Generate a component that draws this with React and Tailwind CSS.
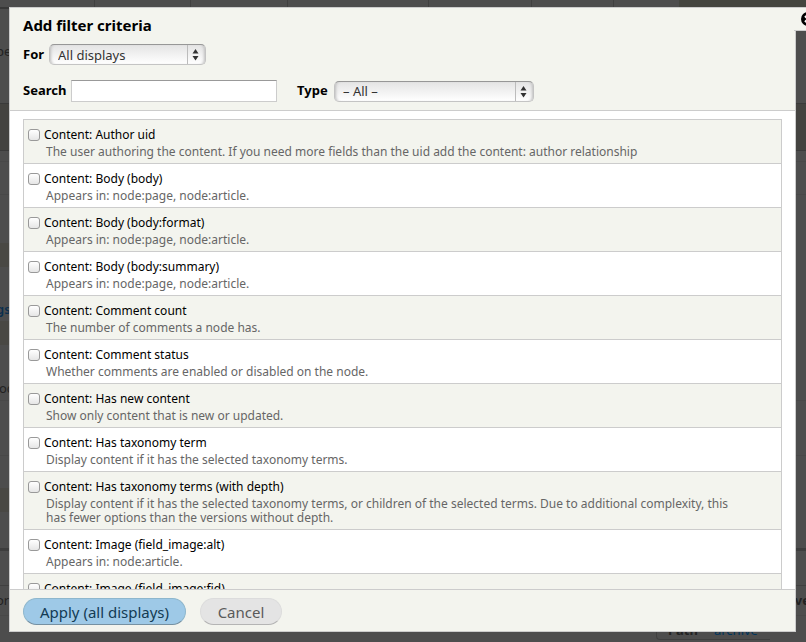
import React from "react";

const criteria = [
  { id: "uid", title: "Content: Author uid", desc: "The user authoring the content. If you need more fields than the uid add the content: author relationship" },
  { id: "body", title: "Content: Body (body)", desc: "Appears in: node:page, node:article." },
  { id: "body-format", title: "Content: Body (body:format)", desc: "Appears in: node:page, node:article." },
  { id: "body-summary", title: "Content: Body (body:summary)", desc: "Appears in: node:page, node:article." },
  { id: "comment-count", title: "Content: Comment count", desc: "The number of comments a node has." },
  { id: "comment-status", title: "Content: Comment status", desc: "Whether comments are enabled or disabled on the node." },
  { id: "has-new", title: "Content: Has new content", desc: "Show only content that is new or updated." },
  { id: "term", title: "Content: Has taxonomy term", desc: "Display content if it has the selected taxonomy terms." },
  { id: "term-depth", title: "Content: Has taxonomy terms (with depth)", desc: "Display content if it has the selected taxonomy terms, or children of the selected terms. Due to additional complexity, this has fewer options than the versions without depth." },
  { id: "image-alt", title: "Content: Image (field_image:alt)", desc: "Appears in: node:article." },
  { id: "image-fid", title: "Content: Image (field_image:fid)" },
];

const Select = ({ id, width, children }) => (
  <div className={`relative ${width}`}>
    <select
      id={id}
      className="block h-[21px] w-full appearance-none rounded-[5px] border border-[#c4c4c4] border-t-[#979797] bg-linear-to-b from-[#e4e4e4] to-white pl-2 text-[13px] leading-[18px] font-normal text-[#333] shadow-[inset_3px_0_3px_-2px_#bdbdbd,inset_-3px_0_3px_-2px_#bdbdbd]"
    >
      {children}
    </select>
    <svg className="pointer-events-none absolute top-px right-px h-[19px] w-[19px]" viewBox="0 0 19 19" aria-hidden="true">
      <path d="M1.5 0v19" stroke="#bcbcbc" />
      <path d="M6.5 8.5 9.5 4l3 4.5zM6.5 11h6l-3 4.5z" fill="#333" />
    </svg>
  </div>
);

// The dimmed views page that shows round the edges of the dialog
const Backdrop = () => (
  <div className="absolute inset-0 flex flex-col overflow-hidden bg-[#4d4d4d] text-[13px] leading-5 text-[#222]" aria-hidden="true">
    <div className="flex h-[7px] shrink-0">
      <div className="w-[95px] border-r border-[#404040]" />
      <div className="w-24 border-r border-[#404040]" />
      <div className="w-[97px] border-r border-[#404040]" />
      <div className="w-[141px] border-r border-[#404040]" />
      <div className="w-[103px] border-r border-[#404040]" />
      <div className="w-[82px] border-r border-[#404040]" />
      <div className="w-[65px]" />
      <div className="flex-1 bg-[#44453f]" />
    </div>
    <div className="flex h-24 shrink-0 items-start border-t-2 border-[#383838] pt-8">
      <span className="-ml-1">pe</span>
    </div>
    <div className="h-12 shrink-0 border-y border-[#3a3a3a] bg-[#444340]" />
    <div className="h-[11px] shrink-0 border-b border-[#484848]" />
    <div className="h-[33px] shrink-0 border-b border-[#484848]" />
    <div className="h-12 shrink-0" />
    <div className="h-6 w-1/2 shrink-0 bg-[#494844]" />
    <div className="flex h-[54px] shrink-0 items-end pb-0.5 text-[#0b2f4d]">
      <span className="-ml-1 font-semibold">gs</span>
    </div>
    <div className="h-6 w-1/2 shrink-0 bg-[#494844]" />
    <div className="flex h-14 shrink-0 items-end border-b border-[#484848] pb-0.5">
      <span className="-ml-px">oc</span>
    </div>
    <div className="h-[55px] shrink-0 border-b border-[#484848]" />
    <div className="h-8 shrink-0" />
    <div className="h-6 w-1/2 shrink-0 bg-[#494844]" />
    <div className="h-9 shrink-0" />
    <div className="h-[3px] shrink-0 bg-[#3d3d3d]" />
    <div className="h-[35px] shrink-0 border-b border-[#404040]" />
    <div className="flex h-[30px] shrink-0 items-start justify-between border-b border-[#484848] pt-1">
      <span className="-ml-1">or</span>
      <span className="-mr-1 font-bold">ve</span>
    </div>
    <div className="flex shrink-0 justify-end pr-9">
      <div className="flex h-6 w-[114px] items-start gap-4 rounded-bl border-b border-l border-[#3f3f3f] pt-1.5 pl-[11px] leading-4">
        <span className="font-bold">Path</span>
        <a href="#archive" className="text-[#00355c]">archive</a>
      </div>
    </div>
  </div>
);

const App = () => (
  <div className="relative h-screen overflow-hidden font-['Noto_Sans','Open_Sans',sans-serif] text-black">
    <Backdrop />

    <div className="absolute inset-0 flex pt-[7px] pr-2.5 pb-2.5 pl-[9px]">
      <div role="dialog" aria-labelledby="dialog-title" className="flex min-h-0 flex-1 flex-col border border-[#ccc] bg-white">
        <header className="border-b border-[#ccc] bg-[#f3f4ee] px-[13px] pt-1.5 pb-2 text-[13px] font-bold">
          <h1 id="dialog-title" className="mb-2 text-[15px] leading-[22px]">Add filter criteria</h1>
          <div className="flex items-center">
            <label htmlFor="for" className="w-[26px]">For</label>
            <Select id="for" width="w-[157px]">
              <option>All displays</option>
            </Select>
          </div>
          <div className="mt-[15px] flex h-[22px] items-center">
            <label htmlFor="search" className="w-12">Search</label>
            <input
              id="search"
              type="text"
              className="h-[22px] w-[206px] border border-[#ccc] border-t-[#999] bg-white px-1 font-normal"
            />
            <label htmlFor="type" className="ml-5 w-[37px]">Type</label>
            <Select id="type" width="w-[200px]">
              <option>– All –</option>
            </Select>
          </div>
        </header>

        <div className="min-h-0 flex-1 overflow-y-auto px-[13px] pt-2 [scrollbar-width:none]">
          <ul className="border border-b-0 border-[#ccc]">
            {criteria.map((c) => (
              <li key={c.id} className="border-b border-[#ccc] pt-[5px] pr-9 pb-1 pl-1 text-xs odd:bg-[#f3f4ee]">
                <div className="flex h-5 items-center gap-1">
                  <input
                    id={c.id}
                    type="checkbox"
                    className="size-3 appearance-none rounded-[3px] border border-[#999] bg-linear-to-b from-white to-[#e6e6e6]"
                  />
                  <label htmlFor={c.id} className="leading-5">{c.title}</label>
                </div>
                {c.desc && <p className="pl-[18px] leading-[14px] text-[#666]">{c.desc}</p>}
              </li>
            ))}
          </ul>
        </div>

        <footer className="flex gap-3.5 border-t border-[#ccc] bg-[#f3f4ee] px-[13px] pt-2 pb-1.5 text-[15px]">
          <button type="button" className="h-[27px] w-[163px] rounded-full border border-[#8eb7cd] border-b-[#7691a2] bg-[#9ec9e7] leading-5 text-[#133b54]">
            Apply (all displays)
          </button>
          <button type="button" className="h-[27px] w-[82px] rounded-full border border-[#dcdcdc] border-b-[#b4b4b4] bg-[#e4e4e4] leading-5 text-[#5a5a5a]">
            Cancel
          </button>
        </footer>
      </div>
    </div>

    <button
      type="button"
      aria-label="Close"
      className="absolute top-[7px] right-0 h-6 w-3 overflow-hidden border-y border-[#ccc] bg-[#f3f4ee]"
    >
      <svg className="ml-[7px] h-[14px] w-[14px]" viewBox="0 0 14 14" aria-hidden="true">
        <circle cx="7" cy="7" r="7" fill="#000" />
        <path d="m4 4 6 6M10 4l-6 6" stroke="#fff" strokeWidth="2.2" />
      </svg>
    </button>
  </div>
);

export default App;
